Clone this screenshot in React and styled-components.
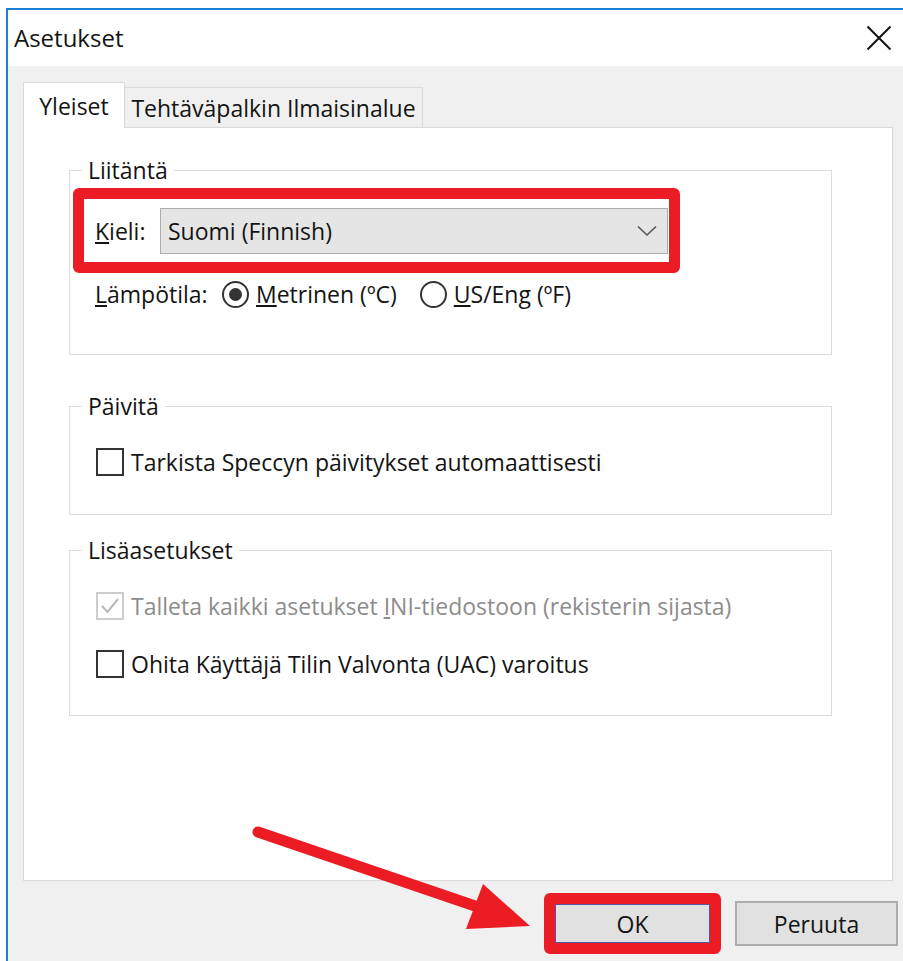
import React from "react";
import styled, { createGlobalStyle } from "styled-components";

const GlobalStyle = createGlobalStyle`
  html, body {
    margin: 0;
    padding: 0;
    background: #fff;
  }
  body {
    overflow: hidden;
    font-family: "Open Sans", "Noto Sans", sans-serif;
    font-size: 23px;
    color: #141414;
  }
`;

const Page = styled.div`
  position: relative;
  width: 903px;
  height: 961px;
  overflow: hidden;
  padding: 8px 0 0 6px;
  box-sizing: border-box;
`;

const Window = styled.div`
  width: 902px;
  height: 960px;
  border-top: 2px solid #1c80d6;
  border-left: 2px solid #1c80d6;
  background: #f0f0f0;
  display: flex;
  flex-direction: column;
`;

const TitleBar = styled.div`
  height: 56px;
  flex: none;
  background: #fff;
  display: flex;
  align-items: center;
  justify-content: space-between;
  padding: 0 18px 0 6px;
`;

const Title = styled.span`
  font-size: 24px;
  margin-top: -2px;
`;

const Content = styled.div`
  padding: 16px 0 0 15px;
`;

const TabStrip = styled.div`
  display: flex;
  align-items: flex-end;
  height: 45px;
`;

const Tab = styled.div`
  position: relative;
  box-sizing: border-box;
  display: flex;
  align-items: center;
  justify-content: center;
  white-space: nowrap;
  border: 1px solid #d9d9d9;
  border-bottom: none;
  padding: 0 6px;
  height: ${(p) => (p.$active ? 46 : 40)}px;
  margin-bottom: ${(p) => (p.$active ? -1 : 0)}px;
  background: ${(p) => (p.$active ? "#fff" : "#f0f0f0")};
  z-index: ${(p) => (p.$active ? 1 : 0)};
  width: ${(p) => p.$w}px;
  & + & {
    border-left: none;
  }
`;

const Panel = styled.div`
  width: 870px;
  height: 754px;
  box-sizing: border-box;
  border: 1px solid #d9d9d9;
  background: #fff;
  padding: 42px 0 0 45px;
`;

const Group = styled.div`
  width: 763px;
  box-sizing: border-box;
  border: 1px solid #dcdcdc;
  margin-top: ${(p) => p.$gap || 0}px;
  padding-bottom: ${(p) => p.$pb}px;
`;

const GroupTitle = styled.div`
  display: table;
  margin: -14px 0 0 12px;
  padding: 0 6px;
  background: #fff;
  line-height: 26px;
`;

const Highlight = styled.div`
  display: flex;
  align-items: center;
  border: 11px solid #ec1c24;
  border-radius: 6px;
`;

const FieldHighlight = styled(Highlight)`
  width: 607px;
  box-sizing: border-box;
  margin: 5px 0 0 3px;
  padding: 9px 1px 8px 11px;
`;

const Row = styled.div`
  display: flex;
  align-items: center;
  height: 34px;
  margin-top: ${(p) => p.$mt}px;
  padding-left: ${(p) => p.$pl}px;
  color: ${(p) => (p.$disabled ? "#8c8c8c" : "inherit")};
`;

const FieldLabel = styled.span`
  width: ${(p) => p.$w}px;
  flex: none;
`;

const Combo = styled.div`
  flex: 1;
  height: 46px;
  box-sizing: border-box;
  border: 1px solid #adadad;
  background: #e5e5e5;
  display: flex;
  align-items: center;
  justify-content: space-between;
  padding: 0 10px 0 7px;
`;

const RadioItem = styled.label`
  display: flex;
  align-items: center;
  gap: 7px;
  margin-right: 23px;
`;

const RadioCircle = styled.span`
  width: 27px;
  height: 27px;
  box-sizing: border-box;
  border: 2px solid #333;
  border-radius: 50%;
  display: flex;
  align-items: center;
  justify-content: center;
  &::after {
    content: "";
    width: 13px;
    height: 13px;
    border-radius: 50%;
    background: #333;
    display: ${(p) => (p.$checked ? "block" : "none")};
  }
`;

const Box = styled.span`
  width: 28px;
  height: 28px;
  flex: none;
  box-sizing: border-box;
  border: 2px solid ${(p) => (p.$disabled ? "#cdcdcd" : "#333")};
  margin-right: 7px;
  display: flex;
  align-items: center;
  justify-content: center;
`;

const Footer = styled.div`
  display: flex;
  justify-content: flex-end;
  align-items: center;
  gap: 14px;
  padding: 12px 12px 0 0;
`;

const Button = styled.div`
  width: ${(p) => p.$w}px;
  height: ${(p) => p.$h}px;
  box-sizing: border-box;
  border: ${(p) => (p.$default ? "1px solid #5656a0" : "2px solid #adadad")};
  background: #e1e1e1;
  display: flex;
  align-items: center;
  justify-content: center;
`;

const Annotation = styled.svg`
  position: absolute;
  left: 0;
  top: 0;
  pointer-events: none;
`;

const Chevron = () => (
  <svg width="20" height="12" viewBox="0 0 20 12">
    <path d="M1 1.5 L10 10 L19 1.5" fill="none" stroke="#555" strokeWidth="1.6" />
  </svg>
);

const CloseIcon = () => (
  <svg width="26" height="26" viewBox="0 0 26 26">
    <path d="M1.5 1.5 L24.5 24.5 M24.5 1.5 L1.5 24.5" stroke="#111" strokeWidth="2" />
  </svg>
);

const Check = () => (
  <svg width="22" height="22" viewBox="0 0 22 22">
    <path d="M3 11 L8.5 17 L19 4" fill="none" stroke="#b8b8b8" strokeWidth="2" />
  </svg>
);

const Checkbox = ({ checked, disabled, children }) => (
  <>
    <Box $disabled={disabled}>{checked && <Check />}</Box>
    <span>{children}</span>
  </>
);

const App = () => {
  return (
    <Page>
      <GlobalStyle />
      <Window>
        <TitleBar>
          <Title>Asetukset</Title>
          <CloseIcon />
        </TitleBar>
        <Content>
          <TabStrip>
            <Tab $active $w={102}>Yleiset</Tab>
            <Tab $w={298}>Tehtäväpalkin Ilmaisinalue</Tab>
          </TabStrip>
          <Panel>
            <Group $pb={43}>
              <GroupTitle>Liitäntä</GroupTitle>
              <FieldHighlight>
                <FieldLabel $w={65}>
                  <u>K</u>ieli:
                </FieldLabel>
                <Combo>
                  <span>Suomi (Finnish)</span>
                  <Chevron />
                </Combo>
              </FieldHighlight>
              <Row $mt={4} $pl={25}>
                <FieldLabel $w={127}>
                  <u>L</u>ämpötila:
                </FieldLabel>
                <RadioItem>
                  <RadioCircle $checked />
                  <span>
                    <u>M</u>etrinen (ºC)
                  </span>
                </RadioItem>
                <RadioItem>
                  <RadioCircle />
                  <span>
                    <u>U</u>S/Eng (ºF)
                  </span>
                </RadioItem>
              </Row>
            </Group>

            <Group $gap={51} $pb={35}>
              <GroupTitle>Päivitä</GroupTitle>
              <Row $mt={26} $pl={26}>
                <Checkbox>Tarkista Speccyn päivitykset automaattisesti</Checkbox>
              </Row>
            </Group>

            <Group $gap={35} $pb={34}>
              <GroupTitle>Lisäasetukset</GroupTitle>
              <Row $mt={26} $pl={26} $disabled>
                <Checkbox checked disabled>
                  Talleta kaikki asetukset <u>I</u>NI-tiedostoon (rekisterin sijasta)
                </Checkbox>
              </Row>
              <Row $mt={24} $pl={26}>
                <Checkbox>Ohita Käyttäjä Tilin Valvonta (UAC) varoitus</Checkbox>
              </Row>
            </Group>
          </Panel>
          <Footer>
            <Highlight>
              <Button $default $w={155} $h={39}>
                OK
              </Button>
            </Highlight>
            <Button $w={163} $h={45}>
              Peruuta
            </Button>
          </Footer>
        </Content>
      </Window>
      <Annotation width="903" height="961" viewBox="0 0 903 961">
        <line
          x1="258"
          y1="832"
          x2="478"
          y2="907"
          stroke="#ec1c24"
          strokeWidth="11"
          strokeLinecap="round"
        />
        <polygon points="483,884 466,929 530,926" fill="#ec1c24" />
      </Annotation>
    </Page>
  );
};

export default App;
